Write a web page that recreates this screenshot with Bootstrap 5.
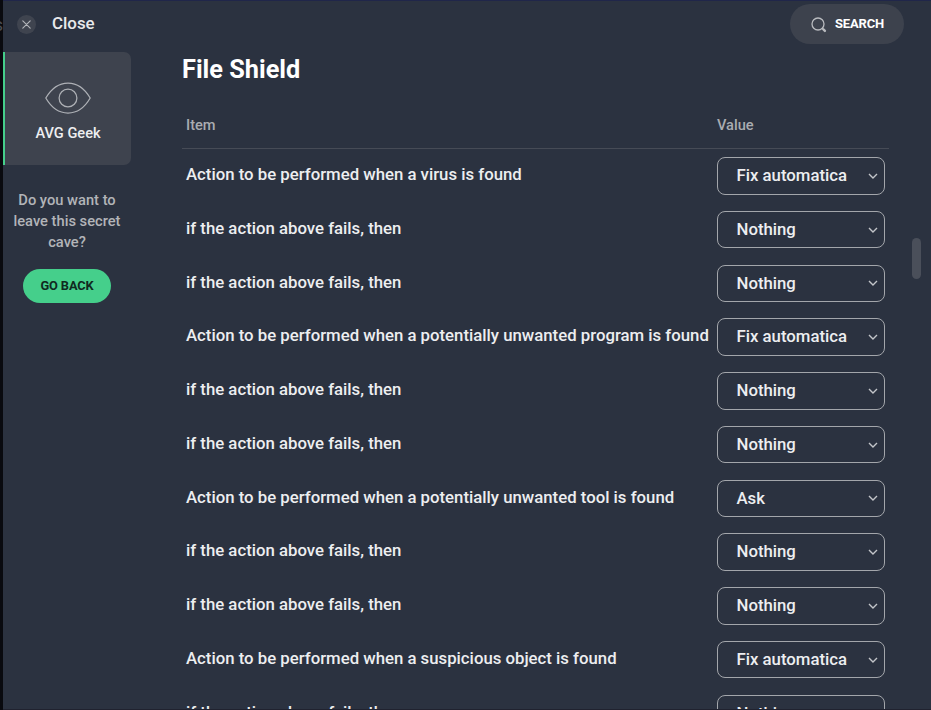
<!DOCTYPE html>
<html lang="en">
<head>
<meta charset="utf-8">
<meta name="viewport" content="width=device-width, initial-scale=1">
<title>AVG Geek</title>
<link href="https://cdn.jsdelivr.net/npm/bootstrap@5.3.0/dist/css/bootstrap.min.css" rel="stylesheet">
<style>
  body { font-family: Roboto, "Liberation Sans", sans-serif; background: #2b3240; color: #edeef0; height: 710px; }
  .backdrop-strip { width: 3px; background: #090a0f; font-size: 18px; line-height: 50px; color: #4b4d53; direction: rtl; }
  .window { border-top: 1px solid #20264a; border-bottom: 1px solid #20222f; }
  .topbar { height: 51px; padding: 0 27px 5px 14px; }
  .close-dot { width: 19px; height: 19px; background: #3f444f; }
  .close-label { font-size: 16.9px; font-weight: 500; margin-left: 16px; color: #e8e9eb; }
  .search-pill { width: 114px; height: 40px; background: #3d424d; color: #fff; font-size: 13px; font-weight: 700; letter-spacing: -.15px; }
  .search-pill:hover { background: #474c57; color: #fff; }
  .sidebar { width: 128px; }
  .tile { height: 112.5px; background: #3e434e; border-left: 2px solid #45cf8b; border-radius: 0 7px 7px 0; padding-top: 30px; }
  .tile-label { font-size: 14.6px; font-weight: 500; line-height: 20px; margin-top: 8px; }
  .prompt { font-size: 14.7px; font-weight: 500; line-height: 21px; color: #b2b4b8; margin: 25px 0 16.5px; }
  .go-back { width: 88px; height: 34px; background: #45cf8b; color: #10291f; font-size: 12.8px; font-weight: 700; letter-spacing: -.1px; }
  .settings { padding-left: 51px; }
  .page-title { font-size: 25.3px; font-weight: 700; line-height: 34px; color: #fff; padding-top: 1px; }
  .grid-head, .grid-row { width: 707px; padding-left: 4px; }
  .grid-head { height: 41px; margin-top: 21px; margin-bottom: 8px; padding-bottom: 4px; border-bottom: 1px solid #464b56; font-size: 14.6px; font-weight: 500; color: #a9acb1; }
  .item-col { width: 531px; white-space: nowrap; }
  .grid-row { height: 53.75px; font-size: 16.75px; font-weight: 500; }
  .grid-row .item-col { line-height: 34.5px; }
  .choice { width: 168px; height: 37.5px; border: 1px solid #a3a6ab; border-radius: 8px; padding: 0 6px 0 18.5px; }
  .thumb { width: 9px; height: 41px; margin: 186px 10px 0 auto; background: #4a4f5a; }
</style>
</head>
<body class="d-flex overflow-hidden">
<div class="backdrop-strip flex-shrink-0 overflow-hidden">s</div>
<div class="window d-flex flex-column flex-grow-1 overflow-hidden">
  <header class="topbar d-flex align-items-center flex-shrink-0">
    <span class="close-dot rounded-circle d-flex align-items-center justify-content-center">
      <svg width="11" height="11" viewBox="0 0 11 11" stroke="#b4b6bb" stroke-width="1.1" stroke-linecap="round"><path d="M1.8 1.8l7.400 7.400M9.200 1.800l-7.400 7.400"/></svg>
    </span>
    <span class="close-label">Close</span>
    <button type="button" class="search-pill btn border-0 rounded-pill ms-auto p-0 d-flex align-items-center justify-content-center">
      <svg class="me-2" width="17" height="17" viewBox="0 0 17 17" fill="none" stroke="#b9bbbf" stroke-width="1.3"><circle cx="8" cy="8" r="6"/><path d="M12.200 12.200l1.500 1.500"/><path d="M13.400 13.400l1.500 1.500" stroke-width="2.400" stroke-linecap="round"/></svg>
      SEARCH
    </button>
  </header>
  <div class="d-flex flex-grow-1 overflow-hidden">
    <aside class="sidebar flex-shrink-0 text-center">
      <div class="tile">
        <svg class="d-block mx-auto" width="46" height="33" viewBox="0 0 46 33" fill="none" stroke="#aeb1b6" stroke-width="1.250"><path d="M.8 16C6 7 13.500 1 23 1S40 7 45.200 16C40 25 32.500 31 23 31S6 25 .8 16z" stroke-linejoin="round"/><circle cx="23" cy="16" r="8.900"/></svg>
        <div class="tile-label">AVG Geek</div>
      </div>
      <p class="prompt">Do you want to<br>leave this secret<br>cave?</p>
      <button type="button" class="go-back btn border-0 rounded-pill p-0">GO BACK</button>
    </aside>
    <main class="settings">
      <h1 class="page-title m-0">File Shield</h1>
      <div class="grid-head d-flex align-items-center"><div class="item-col">Item</div><div>Value</div></div>
      <div id="rows"></div>
    </main>
    <div class="thumb rounded-pill flex-shrink-0"></div>
  </div>
</div>
<script>
  const fails = ["if the action above fails, then", "Nothing"];
  const rows = [
    ["Action to be performed when a virus is found", "Fix automatica"], fails, fails,
    ["Action to be performed when a potentially unwanted program is found", "Fix automatica"], fails, fails,
    ["Action to be performed when a potentially unwanted tool is found", "Ask"], fails, fails,
    ["Action to be performed when a suspicious object is found", "Fix automatica"], fails
  ];
  document.getElementById("rows").innerHTML = rows.map(([item, value]) => `
    <div class="grid-row d-flex align-items-start">
      <div class="item-col">${item}</div>
      <div class="choice d-flex align-items-center justify-content-between"><span>${value}</span>
        <svg width="10" height="6" viewBox="0 0 10 6" fill="none" stroke="#c3c5c9" stroke-width="1.400"><path d="M1 1l4 4 4-4"/></svg></div>
    </div>`).join("");
</script>
<script src="https://cdn.jsdelivr.net/npm/bootstrap@5.3.0/dist/js/bootstrap.bundle.min.js"></script>
</body>
</html>
